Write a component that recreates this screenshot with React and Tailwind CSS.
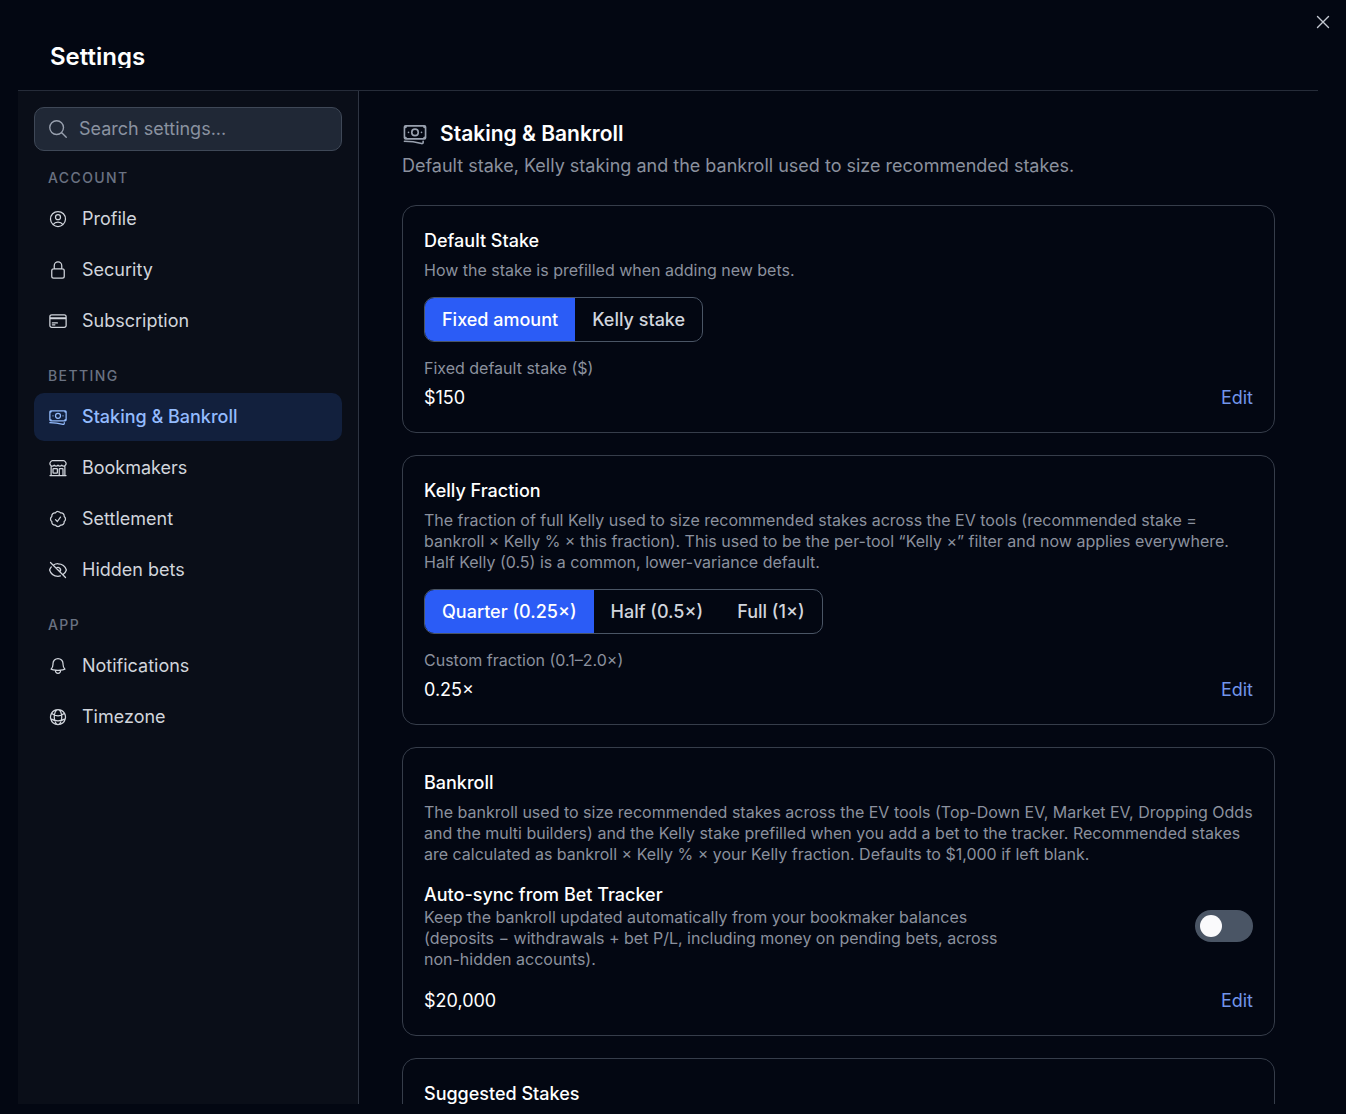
import { useState } from 'react';
import {
  HiOutlineBanknotes,
  HiOutlineBell,
  HiOutlineBuildingStorefront,
  HiOutlineCheckBadge,
  HiOutlineCreditCard,
  HiOutlineEyeSlash,
  HiOutlineGlobeAlt,
  HiOutlineLockClosed,
  HiOutlineMagnifyingGlass,
  HiOutlineUserCircle,
  HiOutlineXMark,
} from 'react-icons/hi2';

const sections = [
  {
    title: 'Account',
    items: [
      { name: 'Profile', icon: HiOutlineUserCircle },
      { name: 'Security', icon: HiOutlineLockClosed },
      { name: 'Subscription', icon: HiOutlineCreditCard },
    ],
  },
  {
    title: 'Betting',
    items: [
      { name: 'Staking & Bankroll', icon: HiOutlineBanknotes },
      { name: 'Bookmakers', icon: HiOutlineBuildingStorefront },
      { name: 'Settlement', icon: HiOutlineCheckBadge },
      { name: 'Hidden bets', icon: HiOutlineEyeSlash },
    ],
  },
  {
    title: 'App',
    items: [
      { name: 'Notifications', icon: HiOutlineBell },
      { name: 'Timezone', icon: HiOutlineGlobeAlt },
    ],
  },
];

function Sidebar() {
  const [active, setActive] = useState('Staking & Bankroll');
  const [search, setSearch] = useState('');

  return (
    <aside className="w-[341px] shrink-0 overflow-hidden border-r border-[#2f3542] bg-[#0a0e18] p-4">
      <label className="flex h-11 items-center gap-2.5 rounded-[10px] border border-[#3f4857] bg-[#202836] px-3">
        <HiOutlineMagnifyingGlass className="size-[22px] shrink-0 text-[#99a1af]" />
        <input
          type="text"
          aria-label="Search settings"
          placeholder="Search settings..."
          value={search}
          onChange={(e) => setSearch(e.target.value)}
          className="w-full min-w-0 bg-transparent text-lg text-white placeholder-[#8a92a0] focus:outline-none"
        />
      </label>

      <nav className="mt-4 flex flex-col gap-5">
        {sections.map((section) => (
          <div key={section.title}>
            <h3 className="mb-1.5 px-3.5 text-sm leading-[22px] font-medium uppercase tracking-widest text-[#6a7282]">
              {section.title}
            </h3>
            <div className="flex flex-col gap-[3px]">
              {section.items.map((item) => (
                <button
                  key={item.name}
                  type="button"
                  onClick={() => setActive(item.name)}
                  className={
                    'flex h-12 items-center gap-3.5 rounded-[10px] px-3.5 text-left text-lg cursor-pointer ' +
                    (active === item.name ? 'bg-[#12203d] font-medium text-[#93bbfd]' : 'text-[#d1d5dc]')
                  }
                >
                  <item.icon className="size-5 shrink-0" />
                  {item.name}
                </button>
              ))}
            </div>
          </div>
        ))}
      </nav>
    </aside>
  );
}

function Card({ title, text, children }) {
  return (
    <section className="rounded-[14px] border border-[#363d4a] px-[21px] pt-[21px] pb-5">
      <h3 className="text-lg font-medium text-white">{title}</h3>
      {text && <p className="mt-[5px] text-base leading-[21px] text-[#8b919e]">{text}</p>}
      {children}
    </section>
  );
}

function Segmented({ options, label }) {
  const [value, setValue] = useState(options[0]);

  return (
    <div
      role="group"
      aria-label={label}
      className="mt-4 inline-flex h-[45px] overflow-hidden rounded-[10px] border border-[#4a5565]"
    >
      {options.map((option) => (
        <button
          key={option}
          type="button"
          onClick={() => setValue(option)}
          className={
            'px-[17px] text-lg font-medium cursor-pointer ' +
            (value === option ? 'bg-[#2b5cf6] text-white' : 'text-[#d1d5dc]')
          }
        >
          {option}
        </button>
      ))}
    </div>
  );
}

function ValueRow({ value }) {
  return (
    <div className="flex items-center justify-between text-lg">
      <span className="text-white">{value}</span>
      <button type="button" className="cursor-pointer text-[#7195ea]">Edit</button>
    </div>
  );
}

export default function App() {
  const [autoSync, setAutoSync] = useState(false);

  return (
    <div className="flex h-screen flex-col overflow-hidden bg-[#030712] pb-2.5 pl-[18px] pr-7 font-['Inter',sans-serif]">
      <header className="flex h-[91px] shrink-0 items-start justify-between border-b border-[#262c39]">
        <h1 className="mt-[45px] overflow-hidden px-8 text-2xl leading-[23px] font-semibold text-white">Settings</h1>
        <button type="button" aria-label="Close" className="-mr-4 mt-[11px] cursor-pointer text-[#c4c9d2]">
          <HiOutlineXMark className="size-[22px]" />
        </button>
      </header>

      <div className="flex min-h-0 flex-1">
        <Sidebar />

        <main className="min-w-0 flex-1 overflow-hidden px-[43px] pt-[29px]">
          <div className="flex items-center gap-3">
            <HiOutlineBanknotes className="size-[26px] text-[#99a1af]" />
            <h2 className="text-[21px] leading-7 font-semibold text-white">Staking &amp; Bankroll</h2>
          </div>
          <p className="mt-1 text-lg text-[#8b919e]">
            Default stake, Kelly staking and the bankroll used to size recommended stakes.
          </p>

          <div className="mt-[25px] flex flex-col gap-[22px]">
            <Card title="Default Stake" text="How the stake is prefilled when adding new bets.">
              <Segmented label="Default stake" options={['Fixed amount', 'Kelly stake']} />
              <p className="mt-4 mb-[5px] text-base leading-[21px] text-[#8b919e]">Fixed default stake ($)</p>
              <ValueRow value="$150" />
            </Card>

            <Card
              title="Kelly Fraction"
              text="The fraction of full Kelly used to size recommended stakes across the EV tools (recommended stake = bankroll × Kelly % × this fraction). This used to be the per-tool “Kelly ×” filter and now applies everywhere. Half Kelly (0.5) is a common, lower-variance default."
            >
              <Segmented label="Kelly fraction" options={['Quarter (0.25×)', 'Half (0.5×)', 'Full (1×)']} />
              <p className="mt-4 mb-[5px] text-base leading-[21px] text-[#8b919e]">Custom fraction (0.1–2.0×)</p>
              <ValueRow value="0.25×" />
            </Card>

            <Card
              title="Bankroll"
              text="The bankroll used to size recommended stakes across the EV tools (Top-Down EV, Market EV, Dropping Odds and the multi builders) and the Kelly stake prefilled when you add a bet to the tracker. Recommended stakes are calculated as bankroll × Kelly % × your Kelly fraction. Defaults to $1,000 if left blank."
            >
              <div className="mt-[17px] mb-[17px] flex items-center justify-between">
                <div className="max-w-[576px]">
                  <label htmlFor="auto-sync" className="block text-lg leading-[25px] font-medium text-white">
                    Auto-sync from Bet Tracker
                  </label>
                  <p className="text-base leading-[21px] text-[#8b919e]">
                    Keep the bankroll updated automatically from your bookmaker balances (deposits − withdrawals + bet
                    P/L, including money on pending bets, across non-hidden accounts).
                  </p>
                </div>
                <input
                  id="auto-sync"
                  type="checkbox"
                  role="switch"
                  checked={autoSync}
                  onChange={(e) => setAutoSync(e.target.checked)}
                  className="flex h-8 w-[58px] shrink-0 cursor-pointer appearance-none items-center rounded-full bg-[#4a5565] px-[5px] before:size-[22px] before:rounded-full before:bg-[#fafafc] checked:justify-end checked:bg-[#2b5cf6]"
                />
              </div>
              <ValueRow value="$20,000" />
            </Card>

            <Card title="Suggested Stakes" />
          </div>
        </main>
      </div>
    </div>
  );
}
